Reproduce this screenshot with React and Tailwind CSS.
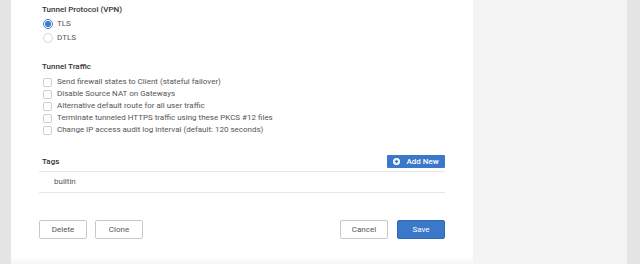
import React from "react";

const font = { fontFamily: "Roboto, 'Liberation Sans', sans-serif" };

function Radio({ checked, label }) {
  return (
    <div className="flex h-[14px] items-center pl-[4px]">
      <span
        className={
          "flex h-[10px] w-[10px] items-center justify-center rounded-full border " +
          (checked ? "border-[#3b78c9] bg-white" : "border-[#d6d6d6] bg-white")
        }
      >
        {checked && <span className="h-[6px] w-[6px] rounded-full bg-[#3b78c9]" />}
      </span>
      <span className="ml-[4px] text-[8px] leading-none text-[#555]">{label}</span>
    </div>
  );
}

function Check({ label }) {
  return (
    <div className="flex h-[12px] items-center pl-[4px]">
      <span className="h-[9px] w-[9px] rounded-[2px] border border-[#cfcfcf] bg-white" />
      <span className="ml-[5px] text-[8px] leading-none text-[#555]">{label}</span>
    </div>
  );
}

function Btn({ children, primary }) {
  return (
    <button
      className={
        "flex h-[19px] w-[48px] items-center justify-center rounded-[2px] border text-[8px] " +
        (primary
          ? "border-[#2f68b3] bg-[#3b78c9] text-white"
          : "border-[#c8c8c8] bg-white text-[#555]")
      }
    >
      {children}
    </button>
  );
}

export default function App() {
  return (
    <div className="flex h-[264px] w-[640px] overflow-hidden bg-[#e5e5e5]" style={font}>
      <div className="w-[11px] shrink-0" />
      <div className="relative flex w-[462px] shrink-0 flex-col bg-white px-[28px] pt-[4px]">
        <div className="flex h-[12px] items-center pl-[3px] text-[8px] font-medium text-[#333]">
          Tunnel Protocol (VPN)
        </div>
        <div className="mt-[1px] flex flex-col">
          <Radio checked label="TLS" />
          <Radio label="DTLS" />
        </div>
        <div className="mt-[16px] flex h-[12px] items-center pl-[3px] text-[8px] font-medium text-[#333]">
          Tunnel Traffic
        </div>
        <div className="mt-[3px] flex flex-col">
          <Check label="Send firewall states to Client (stateful failover)" />
          <Check label="Disable Source NAT on Gateways" />
          <Check label="Alternative default route for all user traffic" />
          <Check label="Terminate tunneled HTTPS traffic using these PKCS #12 files" />
          <Check label="Change IP access audit log interval (default: 120 seconds)" />
        </div>
        <div className="mt-[19px] flex h-[13px] items-center justify-between">
          <span className="pl-[3px] text-[8px] font-medium text-[#333]">Tags</span>
          <button className="flex h-[13px] w-[58px] items-center justify-center gap-[6px] rounded-[1px] bg-[#3b78c9] text-[8px] font-medium text-white">
            <svg width="7" height="7" viewBox="0 0 10 10">
              <circle cx="5" cy="5" r="5" fill="#fff" />
              <path d="M5 2.5v5M2.5 5h5" stroke="#3b78c9" strokeWidth="1.8" />
            </svg>
            Add New
          </button>
        </div>
        <div className="mt-[3px] flex h-[22px] items-center border-y border-[#e6e6e6] pl-[15px] text-[8px] text-[#555]">
          builtin
        </div>
        <div className="mt-[27px] flex items-center">
          <Btn>Delete</Btn>
          <div className="ml-[8px]">
            <Btn>Clone</Btn>
          </div>
          <div className="flex-1" />
          <Btn>Cancel</Btn>
          <div className="ml-[9px]">
            <Btn primary>Save</Btn>
          </div>
        </div>
        <div className="pointer-events-none absolute bottom-0 left-0 right-0 h-[7px] bg-gradient-to-b from-white to-[#f6f6f6]" />
      </div>
      <div className="w-[154px] shrink-0 bg-[#f4f4f4]" />
      <div className="flex-1" />
    </div>
  );
}
